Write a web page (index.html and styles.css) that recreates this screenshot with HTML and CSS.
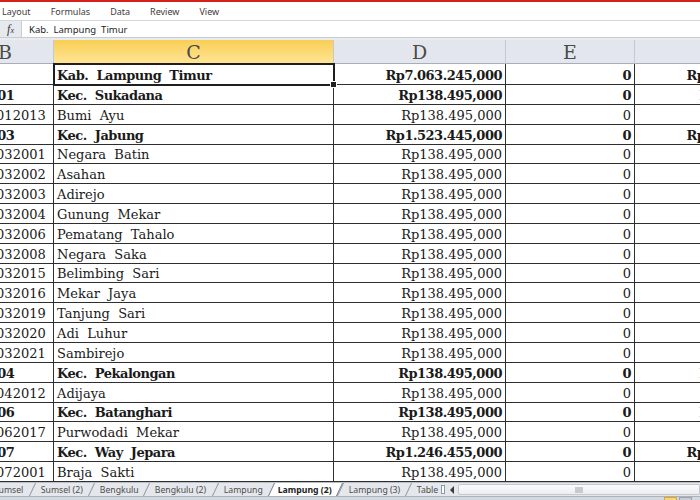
FILE: index.html
```html
<!DOCTYPE html>
<html lang="id">
<head>
<meta charset="utf-8">
<title>Lampung (2)</title>
<link rel="stylesheet" href="styles.css">
</head>
<body>
<div class="app">
  <div class="redline"></div>
  <div class="menu">
    <span>Layout</span><span>Formulas</span><span>Data</span><span>Review</span><span>View</span>
  </div>
  <div class="fbar">
    <div class="fx">f<small>x</small></div>
    <div class="ftext">Kab.  Lampung  Timur</div>
  </div>
  <div class="gap"></div>
  <div class="sheetwrap">
    <div class="sheet">
      <div class="hd">B</div><div class="hd hsel">C</div><div class="hd">D</div><div class="hd">E</div><div class="hd">F</div>

      <div class="c b"></div><div class="c t b selcell">Kab.  Lampung  Timur</div><div class="c n b">Rp7.063.245,000</div><div class="c n b">0</div><div class="c n f b">Rp7.063.245,000</div>
      <div class="c code b"><span>180701</span></div><div class="c t b">Kec.  Sukadana</div><div class="c n b">Rp138.495,000</div><div class="c n b">0</div><div class="c n f b">Rp138.495,000</div>
      <div class="c code"><span>1807012013</span></div><div class="c t">Bumi  Ayu</div><div class="c n">Rp138.495,000</div><div class="c n">0</div><div class="c n f"></div>
      <div class="c code b"><span>180703</span></div><div class="c t b">Kec.  Jabung</div><div class="c n b">Rp1.523.445,000</div><div class="c n b">0</div><div class="c n f b">Rp1.523.445,000</div>
      <div class="c code"><span>1807032001</span></div><div class="c t">Negara  Batin</div><div class="c n">Rp138.495,000</div><div class="c n">0</div><div class="c n f"></div>
      <div class="c code"><span>1807032002</span></div><div class="c t">Asahan</div><div class="c n">Rp138.495,000</div><div class="c n">0</div><div class="c n f"></div>
      <div class="c code"><span>1807032003</span></div><div class="c t">Adirejo</div><div class="c n">Rp138.495,000</div><div class="c n">0</div><div class="c n f"></div>
      <div class="c code"><span>1807032004</span></div><div class="c t">Gunung  Mekar</div><div class="c n">Rp138.495,000</div><div class="c n">0</div><div class="c n f"></div>
      <div class="c code"><span>1807032006</span></div><div class="c t">Pematang  Tahalo</div><div class="c n">Rp138.495,000</div><div class="c n">0</div><div class="c n f"></div>
      <div class="c code"><span>1807032008</span></div><div class="c t">Negara  Saka</div><div class="c n">Rp138.495,000</div><div class="c n">0</div><div class="c n f"></div>
      <div class="c code"><span>1807032015</span></div><div class="c t">Belimbing  Sari</div><div class="c n">Rp138.495,000</div><div class="c n">0</div><div class="c n f"></div>
      <div class="c code"><span>1807032016</span></div><div class="c t">Mekar  Jaya</div><div class="c n">Rp138.495,000</div><div class="c n">0</div><div class="c n f"></div>
      <div class="c code"><span>1807032019</span></div><div class="c t">Tanjung  Sari</div><div class="c n">Rp138.495,000</div><div class="c n">0</div><div class="c n f"></div>
      <div class="c code"><span>1807032020</span></div><div class="c t">Adi  Luhur</div><div class="c n">Rp138.495,000</div><div class="c n">0</div><div class="c n f"></div>
      <div class="c code"><span>1807032021</span></div><div class="c t">Sambirejo</div><div class="c n">Rp138.495,000</div><div class="c n">0</div><div class="c n f"></div>
      <div class="c code b"><span>180704</span></div><div class="c t b">Kec.  Pekalongan</div><div class="c n b">Rp138.495,000</div><div class="c n b">0</div><div class="c n f b">Rp138.495,000</div>
      <div class="c code"><span>1807042012</span></div><div class="c t">Adijaya</div><div class="c n">Rp138.495,000</div><div class="c n">0</div><div class="c n f"></div>
      <div class="c code b"><span>180706</span></div><div class="c t b">Kec.  Batanghari</div><div class="c n b">Rp138.495,000</div><div class="c n b">0</div><div class="c n f b">Rp138.495,000</div>
      <div class="c code"><span>1807062017</span></div><div class="c t">Purwodadi  Mekar</div><div class="c n">Rp138.495,000</div><div class="c n">0</div><div class="c n f"></div>
      <div class="c code b"><span>180707</span></div><div class="c t b">Kec.  Way  Jepara</div><div class="c n b">Rp1.246.455,000</div><div class="c n b">0</div><div class="c n f b">Rp1.246.455,000</div>
      <div class="c code"><span>1807072001</span></div><div class="c t">Braja  Sakti</div><div class="c n">Rp138.495,000</div><div class="c n">0</div><div class="c n f"></div>
      <div class="c code"><span></span></div><div class="c t"></div><div class="c n"></div><div class="c n"></div><div class="c n f"></div>
    </div>
  </div>
  <div class="tabbar">
    <div class="tabs">
      <div class="tab first"><span>Sumsel</span></div>
      <div class="tab"><span>Sumsel (2)</span></div>
      <div class="tab"><span>Bengkulu</span></div>
      <div class="tab"><span>Bengkulu (2)</span></div>
      <div class="tab"><span>Lampung</span></div>
      <div class="tab active"><span>Lampung (2)</span></div>
      <div class="tab"><span>Lampung (3)</span></div>
      <div class="tab last"><span>Table</span></div>
    </div>
    <div class="tabsplit"></div>
    <svg class="arrow" width="6" height="8" viewBox="0 0 6 8"><path d="M5 0 L1 4 L5 8 Z" fill="#3a3a3a"/></svg>
    <div class="hscroll">
      <svg class="grip" width="8" height="6" viewBox="0 0 8 6"><path d="M1 0v6M3 0v6M5 0v6M7 0v6" stroke="#9aa2ad" stroke-width="1"/></svg>
    </div>
  </div>
  <div class="status">
    <div class="status-fill"></div>
    <div class="vbtn on"></div>
    <div class="vbtn"></div>
  </div>
</div>
</body>
</html>
```

FILE: styles.css
```css
* { box-sizing: border-box; }
html, body { margin: 0; padding: 0; }
body {
  width: 700px;
  height: 500px;
  overflow: hidden;
  background: #ffffff;
  font-family: "Noto Sans", "DejaVu Sans", sans-serif;
}
.app {
  width: 700px;
  height: 500px;
  display: flex;
  flex-direction: column;
  overflow: hidden;
}
.redline {
  height: 2px;
  flex: none;
  background: #d8201b;
}
.menu {
  height: 19px;
  flex: none;
  display: flex;
  align-items: center;
  gap: 20px;
  padding-left: 2px;
  font-size: 9px;
  color: #3c3c3c;
  background: #ffffff;
  border-bottom: 1px solid #d3d7dd;
}
.fbar {
  height: 17px;
  flex: none;
  display: flex;
  align-items: stretch;
  border-bottom: 1px solid #c6ccd4;
}
.fx {
  width: 22px;
  flex: none;
  background: #e6e9ee;
  border-right: 1px solid #c9ced6;
  font-family: "Liberation Serif", serif;
  font-style: italic;
  font-size: 12px;
  color: #333333;
  display: flex;
  align-items: center;
  justify-content: center;
}
.fx small { font-size: 8px; margin-top: 3px; }
.ftext {
  flex: 1;
  padding-left: 7px;
  font-size: 9.5px;
  color: #1e1e1e;
  display: flex;
  align-items: center;
  white-space: pre;
}
.gap {
  height: 2px;
  flex: none;
  background: #e9ebee;
}
.sheetwrap {
  flex: 1;
  overflow: hidden;
}
.sheet {
  margin-left: -43px;
  display: grid;
  grid-template-columns: 97px 280px 172px 129px 172px;
  grid-template-rows: 24px 21px;
  grid-auto-rows: 19.85px;
  width: 850px;
}
.hd {
  background: #e3e7ed;
  border-right: 1px solid #c4cad3;
  border-bottom: 1px solid #a6aebb;
  display: flex;
  align-items: center;
  justify-content: center;
  font-family: "DejaVu Serif", serif;
  font-size: 19px;
  color: #4a4a4a;
}
.hd.hsel {
  background: linear-gradient(#f8cf55, #ffe494);
  border-bottom-color: #e2b04a;
}
.c {
  border-right: 1px solid #2e2e2e;
  border-bottom: 1px solid #2e2e2e;
  display: flex;
  align-items: flex-end;
  padding: 0 3px 0 3px;
  overflow: hidden;
  white-space: pre;
  font-family: "DejaVu Serif", serif;
  font-size: 13px;
  line-height: 16px;
  color: #1a1a1a;
}
.c.b { font-weight: bold; letter-spacing: -0.5px; }
.c.n { justify-content: flex-end; }
.c.code { padding-left: 6px; }
.c.code span { flex: none; }
.selcell {
  position: relative;
  overflow: visible;
  outline: 2px solid #1f1f1f;
  outline-offset: -1px;
}
.selcell::after {
  content: "";
  position: absolute;
  right: -4px;
  bottom: -4px;
  width: 5px;
  height: 5px;
  background: #1f1f1f;
  border: 1px solid #ffffff;
}
.tabbar {
  height: 15px;
  flex: none;
  display: flex;
  align-items: stretch;
  background: #e4e7eb;
  border-top: 1px solid #b9bfc8;
  border-bottom: 1px solid #aab1bb;
  overflow: hidden;
}
.tabs {
  display: flex;
  align-items: stretch;
  margin-left: -14px;
  flex: none;
}
.tab {
  transform: skewX(-25deg);
  border-left: 1px solid #8e96a1;
  padding: 0 8px 0 8px;
  display: flex;
  align-items: center;
  font-size: 8.7px;
  color: #4d4d4d;
}
.tab span {
  transform: skewX(25deg);
  white-space: nowrap;
}
.tab.first { border-left: none; }
.tab.active {
  background: #ffffff;
  border-left: 1px solid #6f7782;
  border-right: 1px solid #6f7782;
  font-weight: bold;
  color: #222222;
  padding: 0 7px 0 6px;
}
.tab.last { padding-right: 2px; }
.tabsplit {
  width: 4px;
  flex: none;
  margin: 2px 3px 2px 0;
  border: 1px solid #8f97a2;
  background: #ffffff;
}
.arrow {
  flex: none;
  align-self: center;
  margin: 0 3px 0 1px;
}
.hscroll {
  flex: 1;
  margin: 1px 0 1px 0;
  border: 1px solid #c2c8d0;
  border-radius: 2px;
  background: linear-gradient(#fbfbfc, #eceef1);
  display: flex;
  align-items: center;
  justify-content: center;
}
.status {
  height: 3px;
  flex: none;
  display: flex;
  background: #d3d9e1;
}
.status-fill { flex: 1; }
.vbtn {
  width: 13px;
  height: 3px;
  flex: none;
  margin-right: 2px;
  background: #c9ced6;
  border: 1px solid #9aa2ad;
  border-bottom: none;
}
.vbtn.on {
  background: #fbd66a;
  border-color: #d9a63c;
}
.vbtn:last-child { margin-right: 8px; }
```
